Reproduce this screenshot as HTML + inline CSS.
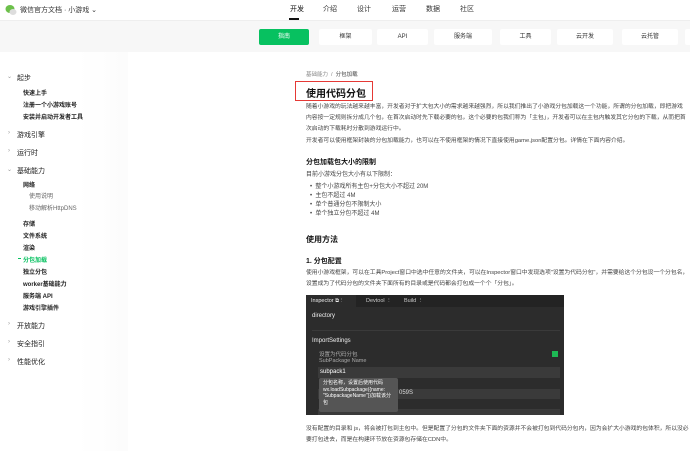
<!DOCTYPE html>
<html><head><meta charset="utf-8"><style>
*{margin:0;padding:0;box-sizing:border-box}
body{width:690px;height:451px;overflow:hidden;background:#fff;font-family:"Liberation Sans","Noto Sans CJK SC",sans-serif;color:#222;position:relative}
.a{position:absolute;white-space:nowrap}
.hdr{position:absolute;left:0;top:0;width:690px;height:21px;background:#fff;border-bottom:1px solid #eee}
.sub{position:absolute;left:0;top:21px;width:690px;height:31px;background:#f7f7f7}
.btn{position:absolute;top:29px;height:16px;background:#fff;border-radius:2px;font-size:6px;text-align:center;line-height:16px;color:#333}
.side{position:absolute;left:0;top:52px;width:128px;height:399px;background:linear-gradient(90deg,#fff 0,#fff 60%,#fcfcfc 100%)}
.s1{font-size:7px;color:#222}
.s2{font-size:6px;color:#222;font-weight:bold}
.s3{font-size:6px;color:#666}
.arr{font-size:6px;color:#999}
.p{font-size:6px;color:#444;line-height:11px}
.code{position:absolute;left:306px;top:295px;width:258px;height:120px;background:#2c2c2c;overflow:hidden}
</style></head><body>
<div class="hdr"></div>
<svg class="a" style="left:5px;top:4px" width="12" height="12" viewBox="0 0 12 12"><ellipse cx="5" cy="5" rx="4.5" ry="4" fill="#6cc04a"/><ellipse cx="8" cy="8" rx="3.5" ry="3" fill="#ddd"/></svg>
<div class="a" style="left:20px;top:5px;font-size:7px;color:#333">微信官方文档 · 小游戏 ⌄</div>
<div class="a" style="left:290px;top:4px;font-size:7px;color:#111">开发</div>
<div class="a" style="left:289px;top:18px;width:10px;height:2px;background:#111"></div>
<div class="a" style="left:323px;top:4px;font-size:7px;color:#333">介绍</div>
<div class="a" style="left:357px;top:4px;font-size:7px;color:#333">设计</div>
<div class="a" style="left:392px;top:4px;font-size:7px;color:#333">运营</div>
<div class="a" style="left:426px;top:4px;font-size:7px;color:#333">数据</div>
<div class="a" style="left:460px;top:4px;font-size:7px;color:#333">社区</div>
<div class="sub"></div>
<div class="btn" style="left:259px;width:50px;background:#07c160;color:#fff">指南</div>
<div class="btn" style="left:319px;width:53px">框架</div>
<div class="btn" style="left:377px;width:51px">API</div>
<div class="btn" style="left:434px;width:58px">服务端</div>
<div class="btn" style="left:500px;width:51px">工具</div>
<div class="btn" style="left:557px;width:56px">云开发</div>
<div class="btn" style="left:622px;width:56px">云托管</div>
<div class="btn" style="left:685px;width:20px"></div>
<div class="side"></div>
<div class="a arr" style="left:7px;top:73px">⌄</div><div class="a s1" style="left:17px;top:73px">起步</div>
<div class="a s2" style="left:23px;top:88px">快速上手</div>
<div class="a s2" style="left:23px;top:100px">注册一个小游戏账号</div>
<div class="a s2" style="left:23px;top:112px">安装并启动开发者工具</div>
<div class="a arr" style="left:8px;top:130px">›</div><div class="a s1" style="left:17px;top:130px">游戏引擎</div>
<div class="a arr" style="left:8px;top:148px">›</div><div class="a s1" style="left:17px;top:148px">运行时</div>
<div class="a arr" style="left:7px;top:166px">⌄</div><div class="a s1" style="left:17px;top:166px">基础能力</div>
<div class="a s2" style="left:23px;top:180px">网络</div>
<div class="a s3" style="left:29px;top:191px">使用说明</div>
<div class="a s3" style="left:29px;top:203px">移动解析HttpDNS</div>
<div class="a s2" style="left:23px;top:219px">存储</div>
<div class="a s2" style="left:23px;top:231px">文件系统</div>
<div class="a s2" style="left:23px;top:243px">渲染</div>
<div class="a" style="left:18px;top:258px;width:3px;height:1px;background:#07c160"></div>
<div class="a s2" style="left:23px;top:255px;color:#07c160">分包加载</div>
<div class="a s2" style="left:23px;top:267px">独立分包</div>
<div class="a s2" style="left:23px;top:279px">worker基础能力</div>
<div class="a s2" style="left:23px;top:291px">服务端 API</div>
<div class="a s2" style="left:23px;top:303px">游戏引擎插件</div>
<div class="a arr" style="left:8px;top:321px">›</div><div class="a s1" style="left:17px;top:321px">开放能力</div>
<div class="a arr" style="left:8px;top:339px">›</div><div class="a s1" style="left:17px;top:339px">安全指引</div>
<div class="a arr" style="left:8px;top:357px">›</div><div class="a s1" style="left:17px;top:357px">性能优化</div>

<div class="a" style="left:306px;top:70px;font-size:5.5px;color:#888">基础能力 &nbsp;/ &nbsp;<span style="color:#444">分包加载</span></div>
<div class="a" style="left:295px;top:81px;width:78px;height:20px;border:1.5px solid #e53935"></div>
<div class="a" style="left:306px;top:85px;font-size:10px;font-weight:bold;color:#111">使用代码分包</div>
<div class="a p" style="left:306px;top:102px;width:382px;white-space:normal;font-size:5.8px">随着小游戏的玩法越来越丰富，开发者对于扩大包大小的需求越来越强烈，所以我们推出了小游戏分包加载这一个功能，所谓的分包加载，即把游戏内容按一定规则拆分成几个包，在首次启动时先下载必要的包，这个必要的包我们称为「主包」，开发者可以在主包内触发其它分包的下载，从而把首次启动的下载耗时分散到游戏运行中。</div>
<div class="a p" style="left:306px;top:136px;font-size:5.8px">开发者可以使用框架封装的分包加载能力，也可以在不使用框架的情况下直接使用game.json配置分包。详情在下面内容介绍。</div>
<div class="a" style="left:306px;top:157px;font-size:7px;font-weight:bold;color:#111">分包加载包大小的限制</div>
<div class="a p" style="left:306px;top:170px">目前小游戏分包大小有以下限制：</div>
<div class="a p" style="left:310px;top:183px;line-height:9px">• &nbsp;整个小游戏所有主包+分包大小不超过 20M<br>• &nbsp;主包不超过 4M<br>• &nbsp;单个普通分包不限制大小<br>• &nbsp;单个独立分包不超过 4M</div>
<div class="a" style="left:306px;top:234px;font-size:8px;font-weight:bold;color:#111">使用方法</div>
<div class="a" style="left:306px;top:256px;font-size:7px;font-weight:bold;color:#111">1. 分包配置</div>
<div class="a p" style="left:306px;top:268px;width:384px;white-space:normal;font-size:5.8px">使用小游戏框架，可以在工具Project窗口中选中任意的文件夹，可以在Inspector窗口中发现选项"设置为代码分包"，并需要给这个分包设一个分包名，设置成为了代码分包的文件夹下面所有的目录或是代码都会打包成一个个「分包」。</div>

<div class="code">
<div class="a" style="left:0;top:0;width:258px;height:12px;background:#232323"></div>
<div class="a" style="left:0;top:0;width:50px;height:12px;background:#2c2c2c"></div>
<div class="a" style="left:5px;top:3px;font-size:5.5px;color:#eee">Inspector ⧉ ⋮</div>
<div class="a" style="left:60px;top:3px;font-size:5.5px;color:#ccc">Devtool ⋮</div>
<div class="a" style="left:98px;top:3px;font-size:5.5px;color:#ccc">Build ⋮</div>
<div class="a" style="left:6px;top:18px;font-size:6px;color:#eee">directory</div>
<div class="a" style="left:6px;top:35px;width:248px;height:1px;background:#3a3a3a"></div>
<div class="a" style="left:6px;top:43px;font-size:6px;color:#eee">ImportSettings</div>
<div class="a" style="left:13px;top:55px;font-size:5.5px;color:#aaa">设置为代码分包</div>
<div class="a" style="left:13px;top:63px;font-size:5.5px;color:#aaa">SubPackage Name</div>
<div class="a" style="left:246px;top:56px;width:6px;height:6px;background:#1db954"></div>
<div class="a" style="left:12px;top:72px;width:242px;height:11px;background:#3a3a3a"></div>
<div class="a" style="left:14px;top:74px;font-size:6px;color:#fff">subpack1</div>
<div class="a" style="left:12px;top:94px;width:242px;height:10px;background:#3a3a3a"></div>
<div class="a" style="left:93px;top:95px;font-size:6px;color:#ddd">059S</div>
<div class="a" style="left:12px;top:114px;width:242px;height:10px;background:#3a3a3a"></div>
<div class="a" style="left:13px;top:83px;width:79px;height:34px;background:#555;border-radius:2px"></div>
<div class="a" style="left:17px;top:85px;font-size:5px;line-height:6.5px;color:#fff">分包名称，设置后使用代码<br>wx.loadSubpackage({name:<br>"SubpackageName"})加载该分<br>包</div>
</div>
<div class="a p" style="left:306px;top:424px;width:384px;white-space:normal;font-size:5.8px">没有配置的目录和 js，将会被打包到主包中。但是配置了分包的文件夹下面的资源并不会被打包到代码分包内，因为会扩大小游戏的包体积，所以没必要打包进去，而是在构建环节放在资源包存储在CDN中。</div>
</body></html>
